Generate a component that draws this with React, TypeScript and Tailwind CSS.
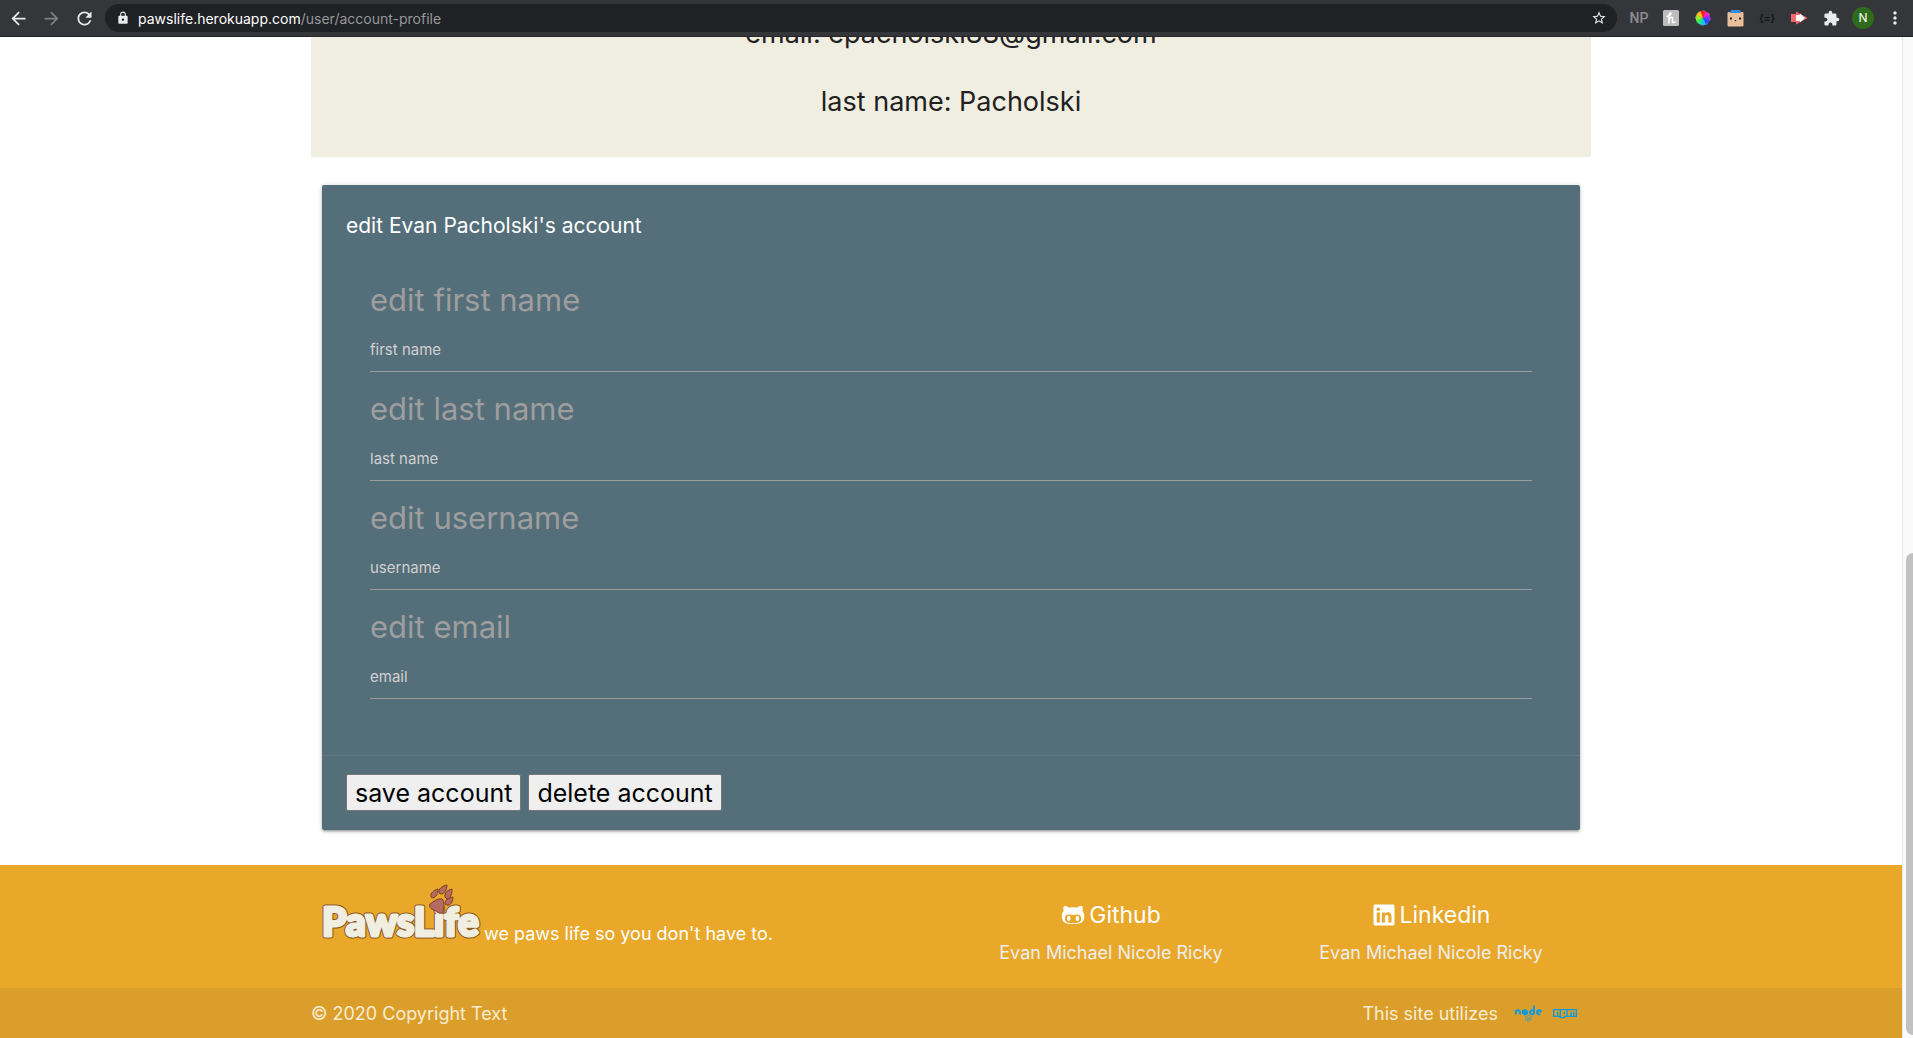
import React from "react";
import { MdArrowBack, MdArrowForward, MdRefresh, MdLock, MdStarBorder, MdExtension, MdMoreVert } from "react-icons/md";
import { FaGithubAlt, FaLinkedin, FaNode, FaNpm } from "react-icons/fa";

const fields = [
  { id: "first-name", heading: "edit first name", hint: "first name" },
  { id: "last-name", heading: "edit last name", hint: "last name" },
  { id: "username", heading: "edit username", hint: "username" },
  { id: "email", heading: "edit email", hint: "email" },
];

const people = ["Evan", "Michael", "Nicole", "Ricky"];

const wheelColors = ["#ff2020", "#ff20c0", "#9030ff", "#2050ff", "#20c0ff", "#20f070", "#90f020", "#ffc020"];

function ColorWheel() {
  return (
    <svg viewBox="-8 -8 16 16" className="size-4" aria-hidden="true">
      {wheelColors.map((color, i) => (
        <path key={color} d="M0 0L-3 -6.6L0 -7.6L3 -6.6Z" fill={color} transform={`rotate(${i * 45})`} />
      ))}
      <path d="M-7.6 0L-5.4 -5.4L0 -7.6L5.4 -5.4L7.6 0L5.4 5.4L0 7.6L-5.4 5.4Z" fill="none" stroke="#8d8e91" strokeWidth="0.8" strokeDasharray="2 4" />
    </svg>
  );
}

function BoxFace() {
  return (
    <svg viewBox="0 0 17 17" className="size-[17px]" aria-hidden="true">
      <rect x="0.5" y="2" width="16" height="14.5" rx="1" fill="#e8bf98" />
      <path d="M4 0h9l1 3H3z" fill="#2f8fe8" />
      <rect x="3" y="7.5" width="2" height="2" fill="#222" />
      <rect x="12" y="7.5" width="2" height="2" fill="#222" />
      <path d="M7.5 10h2l-1 1.5z" fill="#222" />
    </svg>
  );
}

function PlayArrow() {
  return (
    <svg viewBox="0 0 17 14" className="h-3.5 w-[17px]" aria-hidden="true">
      <path d="M0 3h5V0.5L16.5 7L5 13.5V11H0z" fill="#f4696b" />
      <path d="M5 4h4V2.5L14 7l-5 4.500V10H5z" fill="#fff" />
    </svg>
  );
}

function ScriptH() {
  return (
    <svg viewBox="0 0 16 16" className="size-4" aria-hidden="true">
      <rect width="16" height="16" rx="1.5" fill="#bdbdbd" />
      <path d="M4 6.5C6 6 8.5 4.5 8 3C7.3 1.8 5.8 4 6 7.5V13M6 10C7.5 6.5 10 6.5 9.5 9.5C9.2 12 9.5 13.5 12 12" fill="none" stroke="#fff" strokeWidth="1.5" strokeLinecap="round" />
    </svg>
  );
}

const extensions = [
  { name: "NP", icon: <span className="font-['Roboto'] text-[14px] font-medium text-[#8d8e91]">NP</span> },
  { name: "Coupons", icon: <ScriptH /> },
  { name: "Color picker", icon: <ColorWheel /> },
  { name: "Box", icon: <BoxFace /> },
  { name: "JSON", icon: <span className="text-[10px] font-bold text-[#141517]">{"{=}"}</span> },
  { name: "Player", icon: <PlayArrow /> },
  { name: "Extensions", icon: <MdExtension className="size-[17px]" /> },
  { name: "Profile", icon: <span className="flex size-[22px] items-center justify-center rounded-full bg-[#2f6b1c] text-[12px] text-white">N</span> },
  { name: "Menu", icon: <MdMoreVert className="size-5" /> },
];

function BrowserBar() {
  return (
    <header className="flex h-[37px] shrink-0 items-center border-b border-[#232427] bg-[#35363a] pl-2 text-[#e8eaed]">
      <nav aria-label="Browser" className="flex shrink-0 items-center gap-3">
        <button aria-label="Back"><MdArrowBack className="size-[21px]" /></button>
        <button aria-label="Forward" className="text-[#7d7e82]"><MdArrowForward className="size-[21px]" /></button>
        <button aria-label="Reload"><MdRefresh className="size-[21px]" /></button>
      </nav>
      <div className="ml-2.5 flex h-7 min-w-0 grow items-center rounded-full bg-[#202124] pr-2.5 pl-[11px]">
        <MdLock className="mr-2 size-3.5 shrink-0" />
        <p className="grow truncate text-[14px] text-[#96989c]">
          <span className="text-white">pawslife.herokuapp.com</span>/user/account-profile
        </p>
        <button aria-label="Bookmark"><MdStarBorder className="size-4" /></button>
      </div>
      <div className="flex shrink-0 items-center pr-0.5 pl-1.5">
        {extensions.map((ext) => (
          <button key={ext.name} aria-label={ext.name} className="flex w-8 items-center justify-center">
            {ext.icon}
          </button>
        ))}
      </div>
    </header>
  );
}

function Logo() {
  return (
    <svg viewBox="0 0 160 56" className="h-14 w-40 shrink-0 overflow-visible" role="img" aria-label="PawsLife">
      <g fontFamily="Lato, sans-serif" fontWeight="900" fontSize="39" strokeLinejoin="round">
        <text x="0" y="51" fill="#8a5420" stroke="#8a5420" strokeWidth="5" aria-hidden="true">PawsLife</text>
        <text x="0" y="51" fill="#f0ede1" stroke="#f0ede1" strokeWidth="3">PawsLife</text>
      </g>
      <g fill="#b56a62" stroke="#7a3f22" strokeWidth="1">
        <path d="M108 19C112 16 116 13 120 14C123 17 122 22 121 27C119 30 115 27 112 25C108 24 107 21 108 19Z" />
        <path d="M109 12C108 8 112 5 116 4C116 9 114 12 111 13Z" />
        <path d="M117 8C116 4 120 1 125 0C125 5 122 9 119 9Z" />
        <path d="M123 12C122 7 126 5 130 4C130 10 128 14 125 14Z" />
        <path d="M123 19C122 15 127 13 131 12C131 17 128 21 125 20Z" />
      </g>
    </svg>
  );
}

function Links({ icon, title }: { icon: React.ReactNode; title: string }) {
  return (
    <section className="pt-8 text-center text-white">
      <h5 className="flex h-9 items-center justify-center gap-1 text-[23px] leading-9">
        {icon}
        {title}
      </h5>
      <p className="pt-1 text-[18px] leading-8 text-[#eeeeee]">
        {people.map((name, i) => (
          <React.Fragment key={name}>
            {i > 0 && " "}
            <a href="#">{name}</a>
          </React.Fragment>
        ))}
      </p>
    </section>
  );
}

const container = "mx-auto w-[70%] max-w-[1280px]";

export default function App() {
  return (
    <div className="flex h-screen flex-col overflow-hidden bg-white font-['Inter',sans-serif]">
      <BrowserBar />
      <div className="flex min-h-0 grow">
        <div className="flex min-w-0 grow flex-col">
          <main className={container}>
            <section className="flex h-[120px] flex-col justify-end gap-8 overflow-hidden bg-[#f0ede1] pb-[37px] text-center text-[27px] leading-9 text-[#212121]">
              <p>email: epacholski88@gmail.com</p>
              <p>last name: Pacholski</p>
            </section>
            <form className="mx-[11px] mt-7 rounded-[2px] bg-[#546e7a] shadow-[0_2px_2px_0_rgba(0,0,0,0.14),0_3px_1px_-2px_rgba(0,0,0,0.12),0_1px_5px_0_rgba(0,0,0,0.2)]">
              <div className="px-6 pt-[25px] pb-14">
                <h2 className="mb-[21px] text-[21px] leading-8 text-white">edit Evan Pacholski's account</h2>
                {fields.map((field) => (
                  <div key={field.id} className="px-6 pt-2">
                    <label htmlFor={field.id} className="block text-[31px] leading-[57px] text-[#9e9e9e]">
                      {field.heading}
                    </label>
                    <input
                      id={field.id}
                      placeholder={field.hint}
                      className="block h-11 w-full border-b border-[#9e9e9e] bg-transparent text-[15px] text-white outline-none placeholder:text-[#d1d1d1]"
                    />
                  </div>
                ))}
              </div>
              <div className="flex gap-[7px] border-t border-[#607985] px-6 pt-[18px] pb-[19px] text-[25px] leading-[34px] text-black">
                <button type="button" className="rounded-[2px] border border-[#767676] bg-[#efefef] px-2 pt-px">save account</button>
                <button type="button" className="rounded-[2px] border border-[#767676] bg-[#efefef] px-2 pt-px">delete account</button>
              </div>
            </form>
          </main>
          <footer className="mt-[35px] flex grow flex-col bg-[#e9a829]">
            <div className={container + " grid h-[123px] grid-cols-4"}>
              <div className="col-span-2 flex items-start gap-0.5 pt-5 pl-[11px] text-white">
                <Logo />
                <p className="pt-[37px] text-[18px] leading-6">we paws life so you don't have to.</p>
              </div>
              <Links icon={<FaGithubAlt className="size-6" />} title="Github" />
              <Links icon={<FaLinkedin className="size-6" />} title="Linkedin" />
            </div>
            <div className="grow bg-[#db9e2b]">
              <div className={container + " flex h-[50px] items-center text-[18px] text-[#f9ecd1]"}>
                <p className="grow">© 2020 Copyright Text</p>
                <p>This site utilizes</p>
                <a href="#" aria-label="Node.js" className="ml-[17px] text-[#039be5]"><FaNode className="size-[27px]" /></a>
                <a href="#" aria-label="npm" className="mr-3.5 ml-[11px] text-[#039be5]"><FaNpm className="size-6" /></a>
              </div>
            </div>
          </footer>
        </div>
        <div className="flex w-[11px] shrink-0 flex-col items-end justify-end border-l border-[#e8e8e8] bg-[#fafafa] pb-[3px]">
          <div className="h-[482px] w-[7px] rounded-l-full bg-[#c1c1c1]" />
        </div>
      </div>
    </div>
  );
}
